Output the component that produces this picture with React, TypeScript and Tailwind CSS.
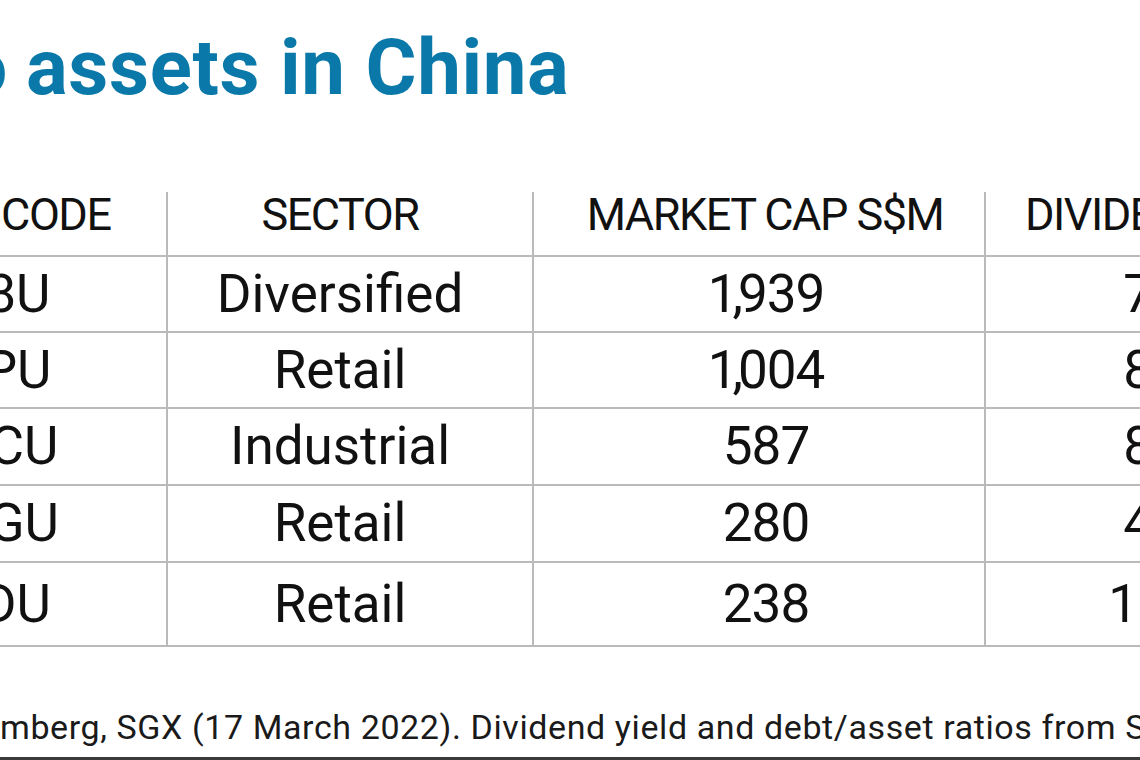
const rows = [
  { code: 'AU8U', sector: 'Diversified', cap: '1,939', yld: '7.2', h: 'h-[76px]' },
  { code: 'CRPU', sector: 'Retail', cap: '1,004', yld: '8.1', h: 'h-[76px]' },
  { code: 'BWCU', sector: 'Industrial', cap: '587', yld: '8.6', h: 'h-[77px]' },
  { code: 'BMGU', sector: 'Retail', cap: '280', yld: '4.7', h: 'h-[77px]' },
  { code: 'CEDU', sector: 'Retail', cap: '238', yld: '15.3', h: 'h-[84px]' },
]

// the reference font has a narrow "1" and comma
function Cap({ value }: { value: string }) {
  if (!value.startsWith('1,')) return <>{value}</>
  return (
    <>
      <span className="tracking-[-5px]">1,</span>
      {value.slice(2)}
    </>
  )
}

export default function App() {
  return (
    <div className="flex h-[760px] w-[1140px] flex-col overflow-hidden bg-white font-['Roboto',sans-serif] text-[#111]">
      <h1 className="flex whitespace-nowrap pt-[29px] text-[78px] font-bold leading-none tracking-[0.6px] text-[#0a79a9]">
        <span className="flex w-[8px] shrink-0 justify-end">S-REITs with exposure to</span>
        <span className="pl-[18px]">assets in China</span>
      </h1>

      <div className="mt-[85px] -ml-[198px] flex w-[1600px] flex-col">
        <div className="flex h-[65px] border-b-2 border-[#bababa] text-[45px] leading-none tracking-[-1.5px]">
          <div className="w-[364px] text-center">STOCK CODE</div>
          <div className="w-[366px] border-l-2 border-[#bababa] pr-[20px] text-center">SECTOR</div>
          <div className="w-[452px] border-l-2 border-[#bababa] pl-[12px] text-center">MARKET CAP S$M</div>
          <div className="w-[356px] whitespace-nowrap border-l-2 border-[#bababa] pl-[39px]">DIVIDEND YIELD %</div>
        </div>
        {rows.map((r) => (
          <div key={r.code} className={`flex border-b-2 border-[#bababa] text-[53px] leading-none ${r.h}`}>
            <div className="flex w-[364px] items-center justify-center">{r.code}</div>
            <div className="flex w-[366px] items-center justify-center border-l-2 border-[#bababa] pr-[20px]">{r.sector}</div>
            <div className="flex w-[452px] items-center justify-center border-l-2 border-[#bababa] pl-[14px] tracking-[-1px]">
              <Cap value={r.cap} />
            </div>
            <div className="flex w-[356px] items-center justify-center border-l-2 border-[#bababa] pr-[6px]">{r.yld}</div>
          </div>
        ))}
      </div>

      <p className="mt-[63px] flex whitespace-nowrap text-[34px] leading-none tracking-[0.6px] text-[#1a1a1a]">
        <span className="flex w-0 shrink-0 justify-end">Source: Bloo</span>
        <span>mberg, SGX (17 March 2022). Dividend yield and debt/asset ratios from S-REITs' latest filings</span>
      </p>

      <div className="mt-auto h-[3px] w-full bg-[#3a3a3a]" />
    </div>
  )
}
